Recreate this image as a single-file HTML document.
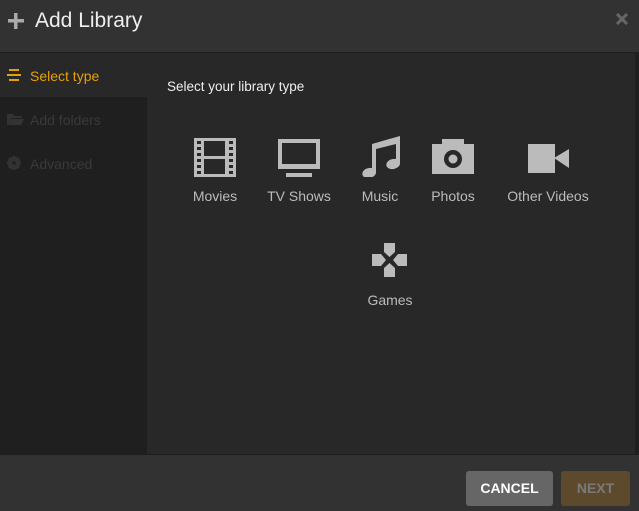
<!DOCTYPE html>
<html><head><style>
*{margin:0;padding:0;box-sizing:border-box}
body{width:639px;height:511px;background:#282828;font-family:"Liberation Sans",sans-serif;position:relative;overflow:hidden}
.hdr{position:absolute;left:0;top:0;width:639px;height:53px;background:#323232;border-bottom:1px solid #1e1e1e}
.hdr .t{position:absolute;left:35px;top:9px;font-size:21px;color:#eee}
.side{position:absolute;left:0;top:53px;width:147px;height:401px;background:#1f1f1f}
.item{position:absolute;left:0;width:147px;height:44px;font-size:14px;color:#3a3a3a}
.item span{position:absolute;left:30px;top:15px}
.sel{background:#282828;color:#e5a00d}
.scroll{position:absolute;left:635px;top:53px;width:4px;height:401px;background:#1f1f1f}
.ttl{position:absolute;left:167px;top:79px;font-size:13.5px;color:#eee}
.lib{position:absolute;font-size:14px;color:#bbb;text-align:center}
.ft{position:absolute;left:0;top:454px;width:639px;height:57px;background:#323232;border-top:1px solid #1e1e1e}
.btn{position:absolute;top:16px;height:35px;border-radius:3px;font-weight:bold;font-size:14px;text-align:center;line-height:35px}
</style></head><body>
<div class="hdr">
<svg style="position:absolute;left:8px;top:13px" width="16" height="16"><rect x="6" y="0" width="3.5" height="16" fill="#aaa"/><rect x="0" y="6" width="16" height="3.5" fill="#aaa"/></svg>
<div class="t">Add Library</div>
<svg style="position:absolute;left:616px;top:13px" width="12" height="12"><path d="M1 1L11 11M11 1L1 11" stroke="#666" stroke-width="3"/></svg>
</div>
<div class="side">
<div class="item sel" style="top:0"><svg style="position:absolute;left:7px;top:16px" width="14" height="12"><rect x="2" y="0" width="10" height="2" fill="#e5a00d"/><rect x="0" y="5" width="14" height="2" fill="#e5a00d"/><rect x="2" y="10" width="10" height="2" fill="#e5a00d"/></svg><span>Select type</span></div>
<div class="item" style="top:44px"><svg style="position:absolute;left:7px;top:16px" width="17" height="12"><path d="M0 1h6l1 2h8v2H4L1 12H0z M4 6h13l-3 6H1z" fill="#333"/></svg><span>Add folders</span></div>
<div class="item" style="top:88px"><svg style="position:absolute;left:7px;top:15px" width="14" height="14"><circle cx="7" cy="7" r="5" fill="none" stroke="#333" stroke-width="3"/><path d="M7 0v14M0 7h14M2 2l10 10M12 2L2 12" stroke="#333" stroke-width="2.5"/><circle cx="7" cy="7" r="1.8" fill="#1f1f1f"/></svg><span>Advanced</span></div>
</div>
<div class="scroll"></div>
<div class="ttl">Select your library type</div>
<svg style="position:absolute;left:194px;top:138px" width="42" height="39"><rect width="42" height="39" fill="#bbb"/><g fill="#282828"><rect x="10" y="3" width="21" height="15"/><rect x="10" y="21" width="21" height="15"/><rect x="3" y="3" width="4" height="3"/><rect x="3" y="9" width="4" height="3"/><rect x="3" y="15" width="4" height="3"/><rect x="3" y="21" width="4" height="3"/><rect x="3" y="27" width="4" height="3"/><rect x="3" y="33" width="4" height="3"/><rect x="35" y="3" width="4" height="3"/><rect x="35" y="9" width="4" height="3"/><rect x="35" y="15" width="4" height="3"/><rect x="35" y="21" width="4" height="3"/><rect x="35" y="27" width="4" height="3"/><rect x="35" y="33" width="4" height="3"/></g></svg>
<div class="lib" style="left:184px;top:188px;width:62px">Movies</div>
<svg style="position:absolute;left:278px;top:139px" width="42" height="38"><rect width="42" height="30" fill="#bbb"/><rect x="4" y="4" width="34" height="21" fill="#282828"/><rect x="8" y="34" width="26" height="4" fill="#bbb"/></svg>
<div class="lib" style="left:259px;top:188px;width:80px">TV Shows</div>
<svg style="position:absolute;left:359px;top:136px" width="42" height="41"><path d="M13 8L41 0v28a7 5 -15 1 1 -4 -5V8L17 13v24a7 5 -15 1 1 -4 -5z" fill="#bbb"/></svg>
<div class="lib" style="left:350px;top:188px;width:60px">Music</div>
<svg style="position:absolute;left:432px;top:139px" width="42" height="35"><path d="M10 0h22v5h10v30H0V5h10z" fill="#bbb"/><circle cx="21" cy="20" r="9" fill="#282828"/><circle cx="21" cy="20" r="4.5" fill="#bbb"/></svg>
<div class="lib" style="left:422px;top:188px;width:62px">Photos</div>
<svg style="position:absolute;left:528px;top:144px" width="41" height="29"><rect width="27" height="29" fill="#bbb"/><path d="M26 14L41 5v19z" fill="#bbb"/></svg>
<div class="lib" style="left:498px;top:188px;width:100px">Other Videos</div>
<svg style="position:absolute;left:372px;top:243px" width="35" height="34"><path d="M12 0h11v9l-5.5 5L12 9zM12 34h11v-9l-5.5-5L12 25zM0 11h9l5 6-5 6H0zM35 11h-9l-5 6 5 6h9z" fill="#bbb"/></svg>
<div class="lib" style="left:360px;top:292px;width:60px">Games</div>
<div class="ft">
<div class="btn" style="left:466px;width:87px;background:#666;color:#fff">CANCEL</div>
<div class="btn" style="left:561px;width:69px;background:#5d4a2c;color:#7a7a7a">NEXT</div>
</div>
</body></html>
